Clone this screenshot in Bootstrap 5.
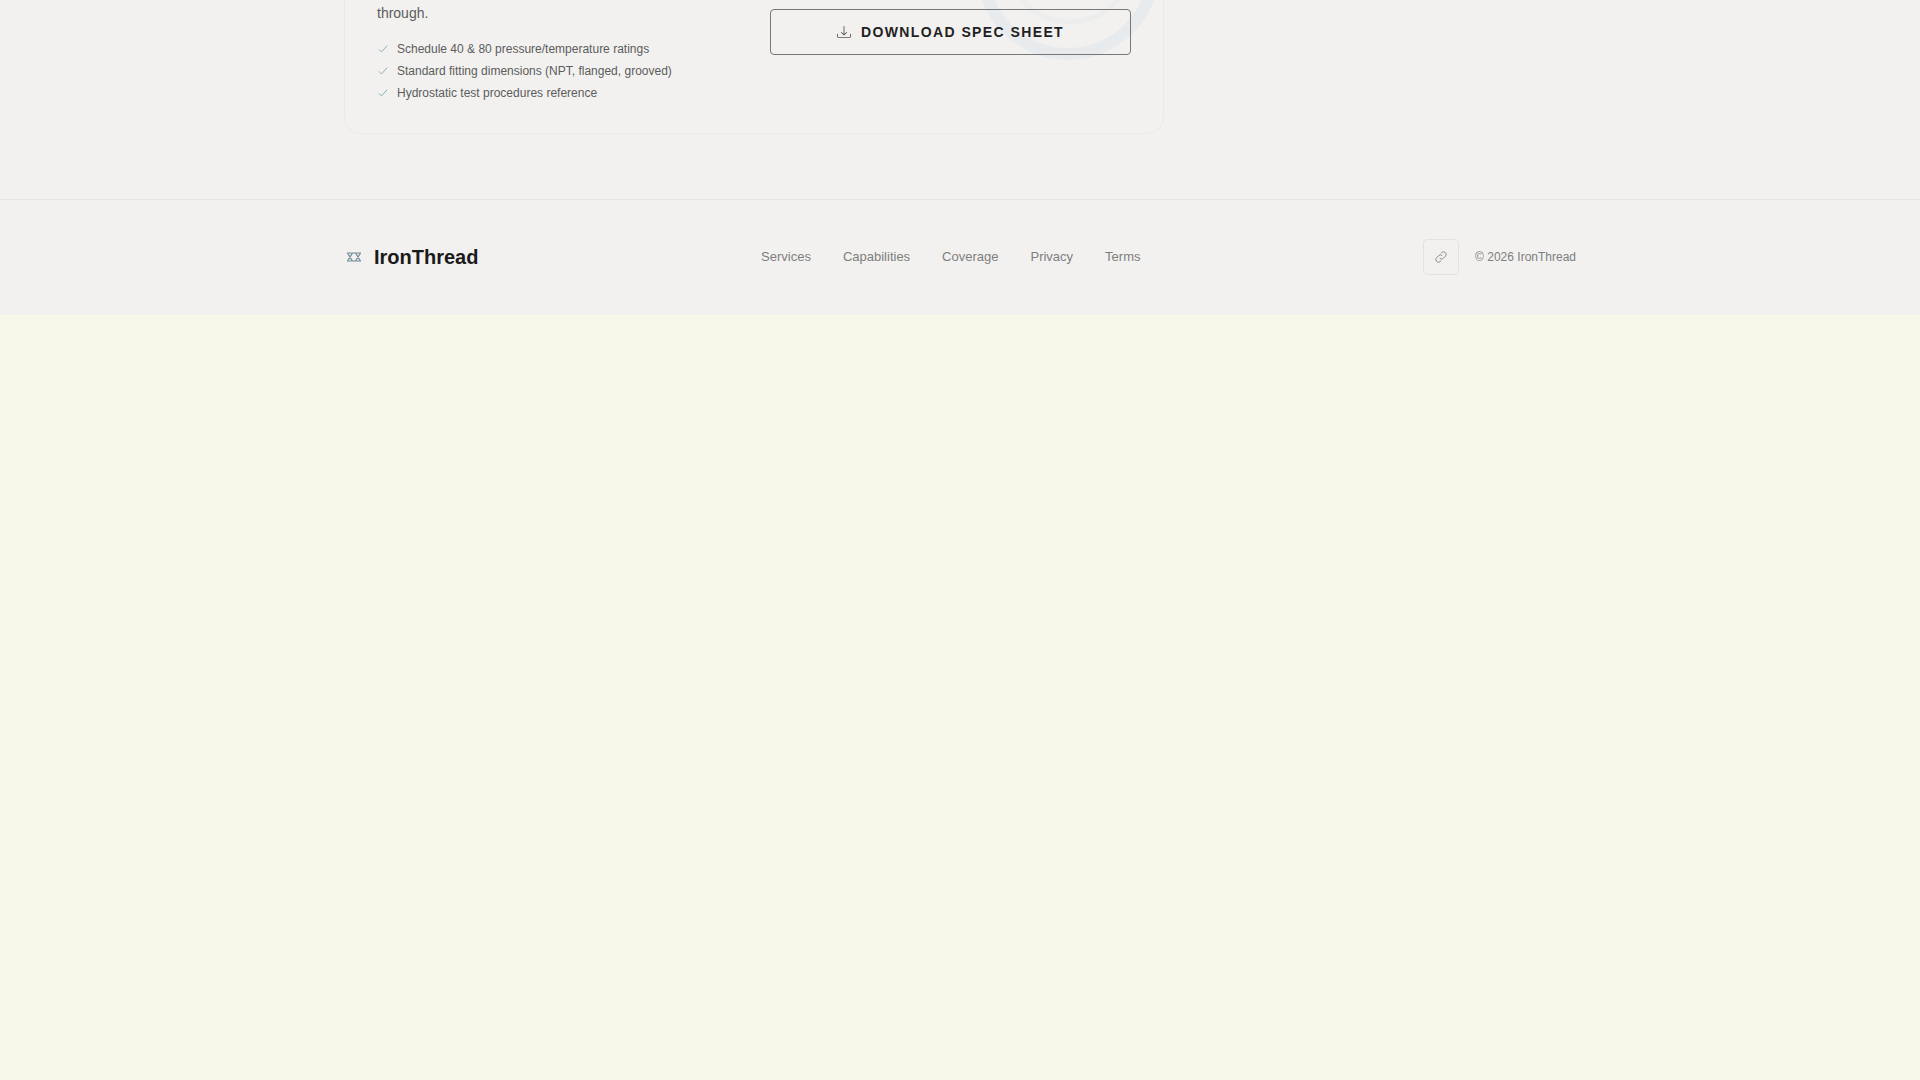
<!DOCTYPE html>
<html lang="en">

<head>
    <meta charset="UTF-8">
    <meta name="viewport" content="width=device-width, initial-scale=1.0">
    <title>IronThread</title>
    <link href="https://cdn.jsdelivr.net/npm/bootstrap@5.3.3/dist/css/bootstrap.min.css" rel="stylesheet">
    <style>
        body {
            background: #f7f8e8;
            font-family: "Liberation Sans", Arial, sans-serif;
            color: #1a1a1a;
        }

        .page {
            background: #f2f1ef;
        }

        .wrap {
            width: 1232px;
            margin: 0 auto;
        }

        /* the page is photographed scrolled down, so the card starts above the top edge */
        .spec-card {
            position: relative;
            overflow: hidden;
            width: 820px;
            margin-top: -101px;
            margin-bottom: 65px;
            padding: 100px 32px 31px;
            border: 1px solid #eaeae8;
            border-radius: 16px;
        }

        .spec-card .col-text,
        .spec-card .col-action {
            width: 361px;
        }

        .spec-intro {
            font-size: 14px;
            line-height: 21px;
            color: #5c5c5c;
            margin-top: 3px;
            margin-bottom: 16px;
        }

        .spec-list {
            font-size: 12px;
            line-height: 18px;
            color: #5c5c5c;
        }

        .spec-list svg {
            color: #86a6b6;
        }

        .rings {
            position: absolute;
            left: 620px;
            top: 0;
            pointer-events: none;
        }

        .btn-spec {
            position: relative;
            height: 46px;
            margin-top: 9px;
            border: 1px solid #777;
            border-radius: 4px;
            font-size: 14px;
            font-weight: 700;
            letter-spacing: 1.4px;
            color: #1f1f1f;
            gap: 10px;
        }

        .btn-spec svg {
            color: #555;
        }

        .site-footer {
            border-top: 1px solid #e6e6e4;
            padding: 39px 0 40px;
        }

        .brand {
            font-size: 20px;
            font-weight: 700;
            line-height: 24px;
            color: #1a1a1a;
            text-decoration: none;
            gap: 10px;
        }

        .footer-links {
            gap: 32px;
            font-size: 13px;
        }

        .footer-links a {
            color: #7e7e7e;
            text-decoration: none;
        }

        .icon-btn {
            width: 36px;
            height: 36px;
            border: 1px solid #e2e2e0;
            border-radius: 4px;
            color: #8a8a8a;
        }

        .copyright {
            font-size: 12px;
            color: #7e7e7e;
        }
    </style>
</head>

<body>
    <div class="page">
        <div class="wrap">
            <section class="spec-card">
                <svg class="rings" width="240" height="200" viewBox="0 0 240 200" fill="none">
                    <circle cx="103" cy="68" r="86" stroke="#e7ebed" stroke-width="12"/>
                    <circle cx="105" cy="60" r="62" stroke="#ecedec" stroke-width="5"/>
                </svg>
                <div class="d-flex justify-content-between">
                    <div class="col-text">
                        <p class="spec-intro">through.</p>
                        <ul class="spec-list list-unstyled d-flex flex-column gap-1 m-0">
                            <li class="d-flex align-items-center gap-2">
                                <svg width="12" height="12" viewBox="0 0 16 16" fill="none" stroke="currentColor" stroke-width="1.2"><path d="M2.5 8.5 6 12l7.5-8.5"/></svg>
                                Schedule 40 &amp; 80 pressure/temperature ratings
                            </li>
                            <li class="d-flex align-items-center gap-2">
                                <svg width="12" height="12" viewBox="0 0 16 16" fill="none" stroke="currentColor" stroke-width="1.2"><path d="M2.5 8.5 6 12l7.5-8.5"/></svg>
                                Standard fitting dimensions (NPT, flanged, grooved)
                            </li>
                            <li class="d-flex align-items-center gap-2">
                                <svg width="12" height="12" viewBox="0 0 16 16" fill="none" stroke="currentColor" stroke-width="1.2"><path d="M2.5 8.5 6 12l7.5-8.5"/></svg>
                                Hydrostatic test procedures reference
                            </li>
                        </ul>
                    </div>
                    <div class="col-action">
                        <a href="#" class="btn btn-spec w-100 d-flex align-items-center justify-content-center text-uppercase">
                            <svg width="14" height="14" viewBox="0 0 16 16" fill="currentColor"><path d="M.5 9.9a.5.5 0 0 1 .5.5v2.5a1 1 0 0 0 1 1h12a1 1 0 0 0 1-1v-2.5a.5.5 0 0 1 1 0v2.5a2 2 0 0 1-2 2H2a2 2 0 0 1-2-2v-2.5a.5.5 0 0 1 .5-.5z"/><path d="M7.65 11.85a.5.5 0 0 0 .7 0l3-3a.5.5 0 0 0-.7-.7L8.5 10.29V1.5a.5.5 0 0 0-1 0v8.79L5.35 8.15a.5.5 0 1 0-.7.7l3 3z"/></svg>
                            Download Spec Sheet
                        </a>
                    </div>
                </div>
            </section>
        </div>

        <footer class="site-footer">
            <div class="wrap d-flex align-items-center justify-content-between">
                <a href="#" class="brand d-flex align-items-center">
                    <svg width="20" height="14" viewBox="0 0 20 14" fill="none" stroke="#6f8c99" stroke-width="1.2"><path d="M3 3h14M3 11h14M3.5 3l5 8M8.5 3l-5 8M11.5 3l5 8M16.5 3l-5 8"/></svg>
                    IronThread
                </a>
                <nav class="footer-links d-flex">
                    <a href="#">Services</a>
                    <a href="#">Capabilities</a>
                    <a href="#">Coverage</a>
                    <a href="#">Privacy</a>
                    <a href="#">Terms</a>
                </nav>
                <div class="d-flex align-items-center gap-3">
                    <a href="#" class="icon-btn d-flex align-items-center justify-content-center">
                        <svg width="14" height="14" viewBox="0 0 16 16" fill="none" stroke="currentColor" stroke-width="1.1"><path d="M6.5 9.5a3 3 0 0 0 4.2 0l2.6-2.6a3 3 0 0 0-4.2-4.2L7.8 4"/><path d="M9.5 6.5a3 3 0 0 0-4.2 0L2.7 9.1a3 3 0 0 0 4.2 4.2L8.2 12"/></svg>
                    </a>
                    <span class="copyright">© 2026 IronThread</span>
                </div>
            </div>
        </footer>
    </div>

    <script src="https://cdn.jsdelivr.net/npm/bootstrap@5.3.3/dist/js/bootstrap.bundle.min.js"></script>
</body>

</html>
